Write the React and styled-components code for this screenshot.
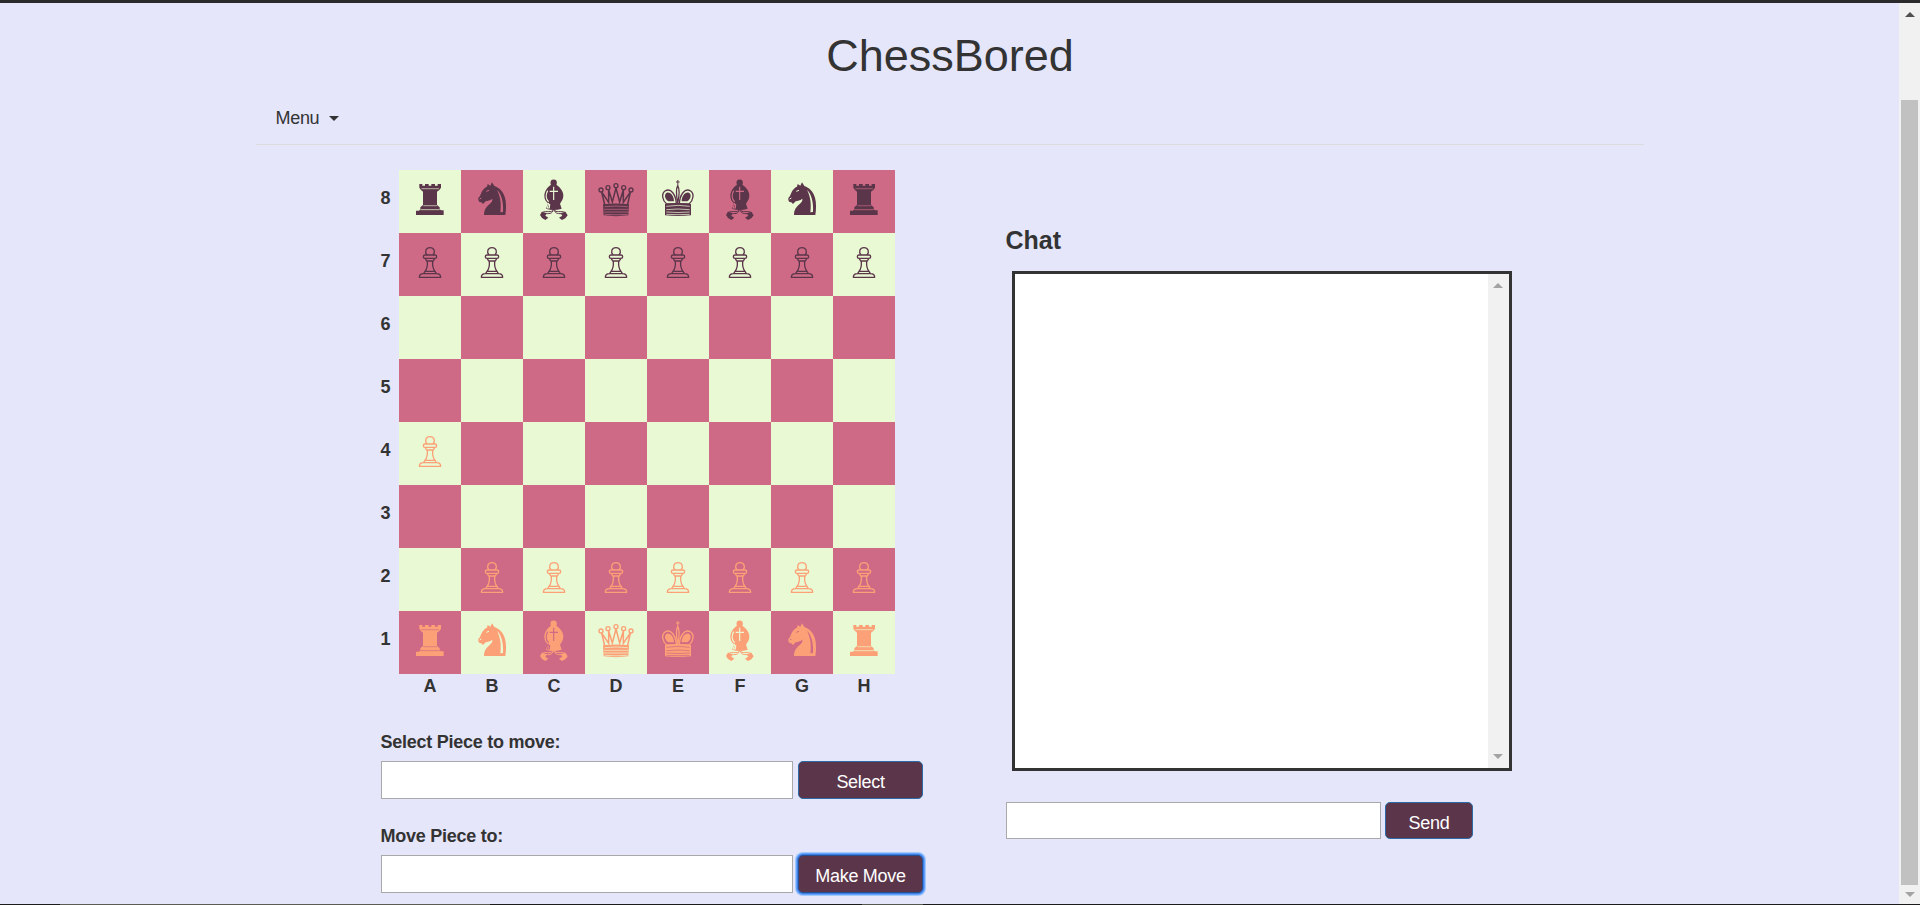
import React from 'react';
import styled, { createGlobalStyle, css } from 'styled-components';

const ink = '#333333';
const plum = '#5b364a';
const rose = '#ce6a85';
const cream = '#e9f9d3';
const peach = '#fca177';
const lavender = '#e5e6fa';

const GlobalStyle = createGlobalStyle`
  * { box-sizing: border-box; }
  html, body { margin: 0; padding: 0; height: 100%; overflow: hidden; }
  body { background: ${lavender}; color: ${ink}; font: 18px/27px "Liberation Sans", Arial, sans-serif; }
`;

const Screen = styled.div`
  display: flex;
  flex-direction: column;
  width: 1920px;
  height: 905px;
  overflow: hidden;
`;
const TopEdge = styled.div`
  flex: 0 0 3px;
  background: #2a2a2c;
`;
const BottomEdge = styled.div`
  flex: 0 0 1px;
  background: linear-gradient(to right, #1c1c1c 0 60px, #5c5c55 60px 490px, #1c1c1c 490px 862px, #55584f 862px 923px, #1c1c1c 923px);
`;
const Viewport = styled.div`
  flex: 1;
  min-height: 0;
  display: flex;
`;
const Page = styled.div`
  flex: 1;
  background: ${lavender};
`;
const Container = styled.div`
  width: 1388px;
  margin: 0 auto;
`;
const Title = styled.h1`
  margin: 0;
  padding: 26px 0 0 1px;
  font-size: 45px;
  line-height: 54px;
  font-weight: 400;
  text-align: center;
`;
const Nav = styled.nav`
  display: flex;
  align-items: center;
  height: 62px;
  padding: 10px 20px 0;
  border-bottom: 1px solid #dcdcdc;
`;
const MenuButton = styled.a`
  display: flex;
  align-items: center;
  gap: 10px;
  letter-spacing: -0.3px;
`;
const Caret = styled.span`
  border: 5px solid transparent;
  border-top-color: ${ink};
  border-bottom: 0;
`;
const Columns = styled.main`
  display: flex;
  padding: 25px 0 0 125px;
`;
const GameColumn = styled.section`
  width: 625px;
`;
const BoardGrid = styled.div`
  display: grid;
  grid-template-columns: 18px repeat(8, 62px);
  grid-template-rows: repeat(8, 63px) 27px;
`;
const Rank = styled.div`
  padding-top: 15px;
  font-weight: 700;
`;
const FileLabel = styled.div`
  padding-left: 1px;
  font-weight: 700;
  text-align: center;
  line-height: 25px;
`;
const Square = styled.div`
  background: ${(p) => (p.$light ? cream : rose)};
  color: ${(p) => (p.$white ? peach : plum)};
  svg { display: block; width: 62px; height: 63px; }
`;
const Field = styled.div`
  padding-top: ${(p) => p.$gap}px;
`;
const Label = styled.label`
  display: block;
  font-weight: 700;
  letter-spacing: -0.26px;
`;
const Row = styled.div`
  display: flex;
  gap: ${(p) => p.$gap || 5}px;
  margin-top: ${(p) => p.$top}px;
`;
const TextInput = styled.input`
  width: ${(p) => p.$w}px;
  height: ${(p) => p.$h || 38}px;
  border: 1px solid #a9a9a9;
  border-radius: 0;
  background: #fff;
  outline: 0;
`;
const Button = styled.button`
  width: ${(p) => p.$w}px;
  height: ${(p) => p.$h || 38}px;
  padding: 5px 0 0 1px;
  border: 1px solid #2a6ba5;
  border-radius: 5px;
  background: ${plum};
  color: #fff;
  font: 18px/27px "Liberation Sans", Arial, sans-serif;
  letter-spacing: -0.3px;
  ${(p) => p.$focused && css`
    border-color: #274f93;
    box-shadow: 0 0 0 1px #3c80e6, 0 0 0 2px #65a2fb, 0 0 0 3px #a3c8fc;
  `}
`;
const ChatColumn = styled.section`
  padding-top: 57px;
`;
const ChatTitle = styled.h2`
  margin: 0;
  font-size: 25px;
  line-height: 27px;
`;
const ChatLog = styled.div`
  display: flex;
  justify-content: flex-end;
  width: 500px;
  height: 500px;
  margin: 17px 0 0 6px;
  border: 3px solid ${ink};
  background: #fff;
`;
const Track = styled.div`
  display: flex;
  flex-direction: column;
  align-items: center;
  justify-content: space-between;
  width: 21px;
  padding: ${(p) => p.$pad};
  background: #f1f1f1;
`;
const Thumb = styled.div`
  width: 17px;
  height: 785px;
  margin: auto 0 7px;
  background: #c1c1c1;
`;
const Arrow = styled.span`
  border: 5px solid transparent;
  ${(p) => (p.$up ? 'border-top: 0; border-bottom-color' : 'border-bottom: 0; border-top-color')}: ${(p) => p.$color};
`;

const drawings = {
  rook: (bg) => (
    <>
      <path fill="currentColor" d="M61 42H70V47H78V42H89V47H97V42H108V47H116V42H126V53L121 60L114 65V105L122 112V118L126 121H134V135H51V122H60L64 118V112L72 105V65L66 60L61 53Z" />
      <path stroke={bg} strokeOpacity=".5" strokeWidth="4" fill="none" d="M67 56H120M73 107H114" />
      <path stroke={bg} strokeOpacity=".7" strokeWidth="3" fill="none" d="M64 119H122" />
    </>
  ),
  knight: (bg) => (
    <>
      <path fill="currentColor" d="M93 37L100 48C115 53 127 65 132 83C136 97 136 117 133 135H69C69 118 77 110 86 102C92 96 95 92 94 86C87 92 80 92 74 94L66 102L61 97C54 98 51 92 52 84L57 78C62 65 67 54 78 50L80 42L88 47Z" />
      <path fill={bg} d="M108 59C121 71 128 96 126 126L118 127C121 104 119 80 108 59Z" />
      <path stroke={bg} strokeWidth="3" fill="none" d="M76 64L84 61M56 87L61 84" />
    </>
  ),
  bishop: (bg) => (
    <>
      <circle cx="92" cy="38" r="9.5" fill="currentColor" />
      <path fill="currentColor" d="M92 40C79 46 64 60 64 78C64 89 70 95 75 100L69 116Q92 124 116 116L111 101C116 94 121 88 121 76C121 60 105 46 92 40Z" />
      <path stroke={bg} strokeWidth="3.5" fill="none" d="M92 50V90M80 64H105" />
      <path stroke={bg} strokeWidth="3.5" fill="none" d="M74 62C67 74 68 88 77 95M77 99L73 114H79L80 102" />
      <path stroke="currentColor" strokeWidth="3" fill="none" d="M91 118C85 131 72 120 56 128M93 118C99 131 112 120 128 128M91 121C84 137 72 127 61 133M94 121C100 137 112 127 124 133" />
      <path fill="currentColor" d="M57 125L51 135L57 144L67 150L76 143L67 137L71 130ZM127 125L134 136L127 145L117 150L108 143L118 137L113 130Z" />
    </>
  ),
  queen: (bg) => (
    <>
      <path fill={bg} stroke="currentColor" strokeWidth="4.5" strokeLinejoin="miter" d="M60 108L50 66L71 97L71 60L82 96L93 54L104 96L115 60L115 97L136 66L127 108Z" />
      <g fill={bg} stroke="currentColor" strokeWidth="4"><circle cx="48" cy="60" r="6" /><circle cx="69" cy="53" r="6" /><circle cx="93" cy="47" r="6" /><circle cx="116" cy="53" r="6" /><circle cx="138" cy="60" r="6" /></g>
      <path fill="currentColor" d="M54 103Q93 98 132 103L130 136Q93 141 56 136Z" />
      <path stroke={bg} strokeOpacity=".8" strokeWidth="2.5" fill="none" d="M59 110Q93 106 128 110M57 118H130M57 126H130M59 133Q93 136 128 133" />
    </>
  ),
  king: (bg) => (
    <>
      <g fill={bg} stroke="currentColor" strokeWidth="4">
        <path d="M59 102C45 90 43 71 54 63C72 52 87 75 88 102Z" />
        <path d="M126 102C140 90 142 71 131 63C113 52 98 75 97 102Z" />
        <path d="M92 48C85 57 89 82 92 101C96 82 99 57 92 48Z" />
      </g>
      <path fill="currentColor" d="M64 94C52 86 51 71 60 68C72 66 81 80 81 94ZM121 94C133 86 134 71 125 68C113 66 104 80 104 94Z" />
      <path stroke="currentColor" strokeWidth="3" d="M92.5 30V50M87 36H98" />
      <path fill="currentColor" d="M54 102Q93 96 132 102V136Q93 140 54 136Z" />
      <path stroke={bg} strokeOpacity=".85" strokeWidth="2.5" fill="none" d="M58 109Q93 103 128 109M58 119Q93 115 128 119M58 126Q93 129 128 126M58 133Q93 135 128 133" />
    </>
  ),
  pawn: () => (
    <g fill="none" stroke="currentColor" strokeWidth="4" strokeLinejoin="round">
      <path d="M84 65C76 57 80 44 93 44C106 44 110 57 102 65" />
      <rect x="73" y="66" width="40" height="10" rx="5" />
      <path d="M79 77L83 84H103L107 77M85 85C86 100 84 108 78 115M101 85C100 100 102 108 108 115M78 115H108L112 122H74ZM74 122C67 122 61 125 61 133H125C125 125 119 122 112 122Z" />
    </g>
  ),
};

function Piece({ type, light }) {
  return (
    <svg viewBox="0 0 186 189" aria-label={type}>
      {drawings[type](light ? cream : rose)}
    </svg>
  );
}

const back = ['rook', 'knight', 'bishop', 'queen', 'king', 'bishop', 'knight', 'rook'];
const files = ['A', 'B', 'C', 'D', 'E', 'F', 'G', 'H'];

function pieceAt(rank, file) {
  if (rank === 8 || rank === 1) return back[file];
  if (rank === 7 || (rank === 2 && file > 0) || (rank === 4 && file === 0)) return 'pawn';
  return null;
}

function Board() {
  return (
    <BoardGrid>
      {[8, 7, 6, 5, 4, 3, 2, 1].map((rank) => (
        <React.Fragment key={rank}>
          <Rank>{rank}</Rank>
          {files.map((name, file) => {
            const light = (rank + file) % 2 === 0;
            const type = pieceAt(rank, file);
            return (
              <Square key={name} $light={light} $white={rank < 5}>
                {type && <Piece type={type} light={light} />}
              </Square>
            );
          })}
        </React.Fragment>
      ))}
      <span />
      {files.map((name) => <FileLabel key={name}>{name}</FileLabel>)}
    </BoardGrid>
  );
}

export default function App() {
  return (
    <>
      <GlobalStyle />
      <Screen>
        <TopEdge />
        <Viewport>
          <Page>
            <Container>
              <Title>ChessBored</Title>
              <Nav><MenuButton>Menu<Caret /></MenuButton></Nav>
              <Columns>
                <GameColumn>
                  <Board />
                  <Field $gap={28}>
                    <Label>Select Piece to move:</Label>
                    <Row $top={5}>
                      <TextInput $w={412} />
                      <Button $w={125}>Select</Button>
                    </Row>
                  </Field>
                  <Field $gap={24}>
                    <Label>Move Piece to:</Label>
                    <Row $top={5}>
                      <TextInput $w={412} />
                      <Button $w={125} $focused>Make Move</Button>
                    </Row>
                  </Field>
                </GameColumn>
                <ChatColumn>
                  <ChatTitle>Chat</ChatTitle>
                  <ChatLog>
                    <Track $pad="9px 0 9px"><Arrow $up $color="#a3a3a3" /><Arrow $color="#a3a3a3" /></Track>
                  </ChatLog>
                  <Row $top={31} $gap={4}>
                    <TextInput $w={375} $h={37} />
                    <Button $w={88} $h={37}>Send</Button>
                  </Row>
                </ChatColumn>
              </Columns>
            </Container>
          </Page>
          <Track $pad="9px 0 7px"><Arrow $up $color="#505050" /><Thumb /><Arrow $color="#a3a3a3" /></Track>
        </Viewport>
        <BottomEdge />
      </Screen>
    </>
  );
}
